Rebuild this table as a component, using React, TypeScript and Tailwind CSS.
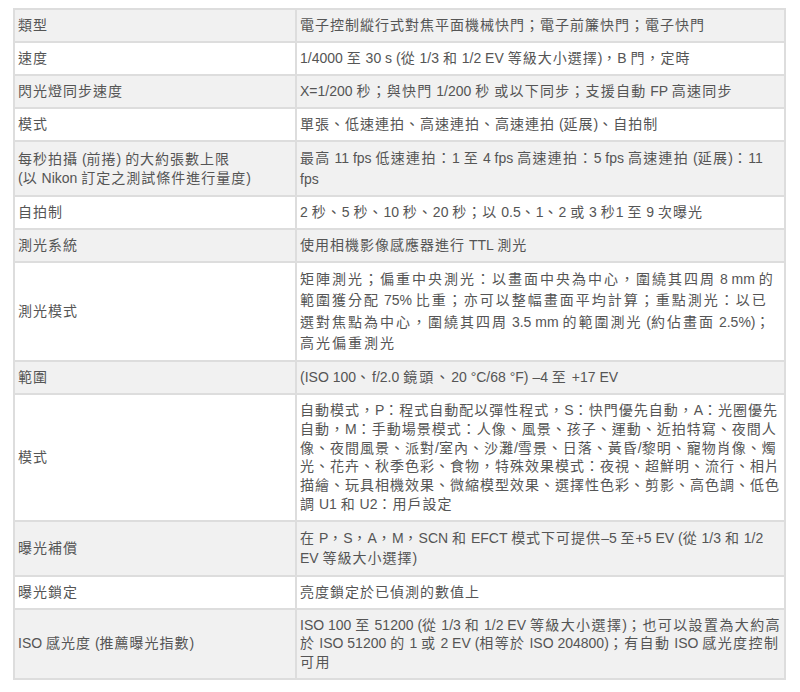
import React from "react";

// split text so CJK runs get the wider pitch seen in the screenshot
const CJK = /([\u3000-\u303f\u3400-\u9fff\uff00-\uffef]+)/;

function Txt({ children, track }: { children: string; track: string }) {
  return (
    <>
      {children.split(CJK).map((part, i) =>
        CJK.test(part) ? (
          <span key={i} className={track}>
            {part}
          </span>
        ) : (
          <React.Fragment key={i}>{part}</React.Fragment>
        )
      )}
    </>
  );
}

function Lines({ lines, track = "tracking-[1px]" }: { lines: string[]; track?: string }) {
  return (
    <>
      {lines.map((line, i) => (
        <span key={i} className="block whitespace-nowrap">
          <Txt track={track}>{line}</Txt>
        </span>
      ))}
    </>
  );
}

type Row = {
  label: string[];
  value: string[];
  leading?: string;
  track?: string;
};

const ROWS: Row[] = [
  { label: ["類型"], value: ["電子控制縱行式對焦平面機械快門；電子前簾快門；電子快門"] },
  { label: ["速度"], value: ["1/4000 至 30 s (從 1/3 和 1/2 EV 等級大小選擇)，B 門，定時"] },
  {
    label: ["閃光燈同步速度"],
    value: ["X=1/200 秒；與快門 1/200 秒 或以下同步；支援自動 FP 高速同步"],
    track: "tracking-[1.2px]",
  },
  { label: ["模式"], value: ["單張、低速連拍、高速連拍、高速連拍 (延展)、自拍制"] },
  {
    label: ["每秒拍攝 (前捲) 的大約張數上限", "(以 Nikon 訂定之測試條件進行量度)"],
    value: ["最高 11 fps 低速連拍：1 至 4 fps 高速連拍：5 fps 高速連拍 (延展)：11", "fps"],
    leading: "leading-[20.5px]",
    track: "tracking-[1.3px]",
  },
  { label: ["自拍制"], value: ["2 秒、5 秒、10 秒、20 秒；以 0.5、1、2 或 3 秒1 至 9 次曝光"] },
  { label: ["測光系統"], value: ["使用相機影像感應器進行 TTL 測光"] },
  {
    label: ["測光模式"],
    value: [
      "矩陣測光；偏重中央測光：以畫面中央為中心，圍繞其四周 8 mm 的",
      "範圍獲分配 75% 比重；亦可以整幅畫面平均計算；重點測光：以已",
      "選對焦點為中心，圍繞其四周 3.5 mm 的範圍測光 (約佔畫面 2.5%)；",
      "高光偏重測光",
    ],
    leading: "leading-[21.25px]",
    track: "tracking-[2px]",
  },
  {
    label: ["範圍"],
    value: ["(ISO 100、f/2.0 鏡頭、20 °C/68 °F) –4 至 +17 EV"],
    track: "tracking-[2px]",
  },
  {
    label: ["模式"],
    value: [
      "自動模式，P：程式自動配以彈性程式，S：快門優先自動，A：光圈優先",
      "自動，M：手動場景模式：人像、風景、孩子、運動、近拍特寫、夜間人",
      "像、夜間風景、派對/室內、沙灘/雪景、日落、黃昏/黎明、寵物肖像、燭",
      "光、花卉、秋季色彩、食物，特殊效果模式：夜視、超鮮明、流行、相片",
      "描繪、玩具相機效果、微縮模型效果、選擇性色彩、剪影、高色調、低色",
      "調 U1 和 U2：用戶設定",
    ],
    leading: "leading-[18.8px]",
  },
  {
    label: ["曝光補償"],
    value: ["在 P，S，A，M，SCN 和 EFCT 模式下可提供–5 至+5 EV (從 1/3 和 1/2", "EV 等級大小選擇)"],
    leading: "leading-[20.5px]",
  },
  { label: ["曝光鎖定"], value: ["亮度鎖定於已偵測的數值上"] },
  {
    label: ["ISO 感光度 (推薦曝光指數)"],
    value: [
      "ISO 100 至 51200 (從 1/3 和 1/2 EV 等級大小選擇)；也可以設置為大約高",
      "於 ISO 51200 的 1 或 2 EV (相等於 ISO 204800)；有自動 ISO 感光度控制",
      "可用",
    ],
    leading: "leading-[18.67px]",
    track: "tracking-[1.4px]",
  },
];

export default function App() {
  return (
    <div className="min-h-[692px] bg-white pl-[13px] pt-[8px] font-['Liberation_Sans','Noto_Sans_CJK_TC',sans-serif] text-[14px] text-[#555]">
      <table className="w-[773px] table-fixed border-separate border-spacing-0 border-l-2 border-t-2 border-[#ddd]">
        <colgroup>
          <col className="w-[282px]" />
          <col className="w-[489px]" />
        </colgroup>
        <tbody>
          {ROWS.map((row, i) => {
            const bg = i % 2 === 0 ? "bg-[#f1f1f1]" : "bg-white";
            const leading = row.leading ?? "leading-[19px]";
            return (
              <tr key={i} className={bg}>
                <td className="border-b-2 border-r-2 border-[#ddd] px-[3px] py-[6px] align-middle leading-[19px]">
                  <Lines lines={row.label} />
                </td>
                <td className={`border-b-2 border-r-2 border-[#ddd] px-[3px] py-[6px] align-top ${leading}`}>
                  <Lines lines={row.value} track={row.track} />
                </td>
              </tr>
            );
          })}
        </tbody>
      </table>
    </div>
  );
}
